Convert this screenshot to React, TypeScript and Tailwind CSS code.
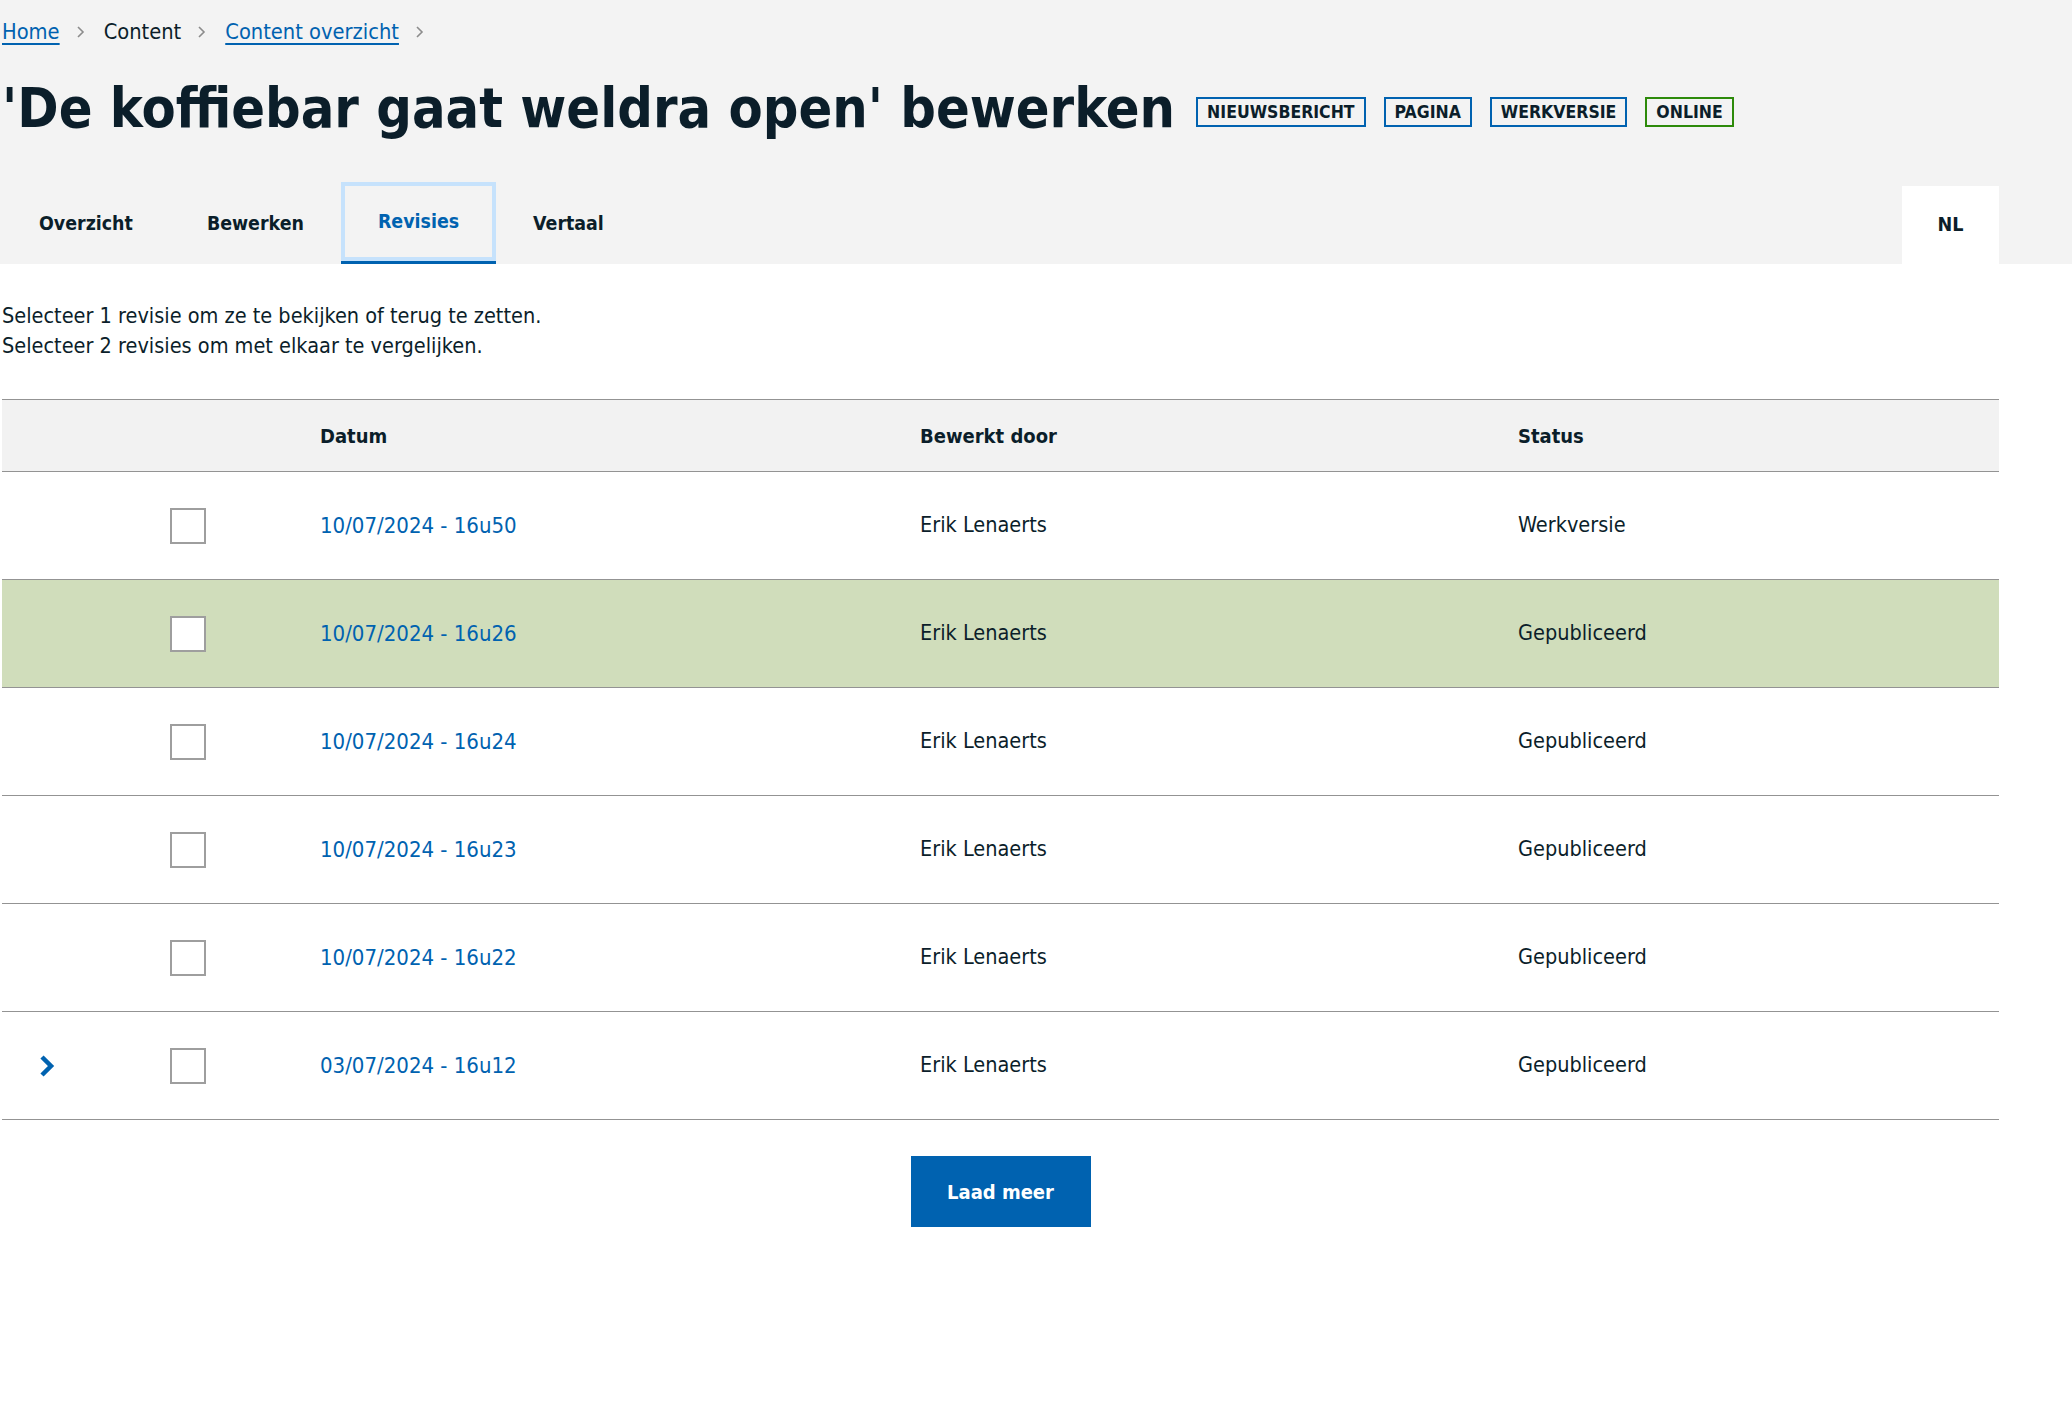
import React from "react";

const font = "font-['DejaVu_Sans_Condensed','Liberation_Sans',sans-serif]";

const Crumb = () => (
  <svg width="9" height="14" viewBox="0 0 9 14" className="ml-[16px] mr-[19px]">
    <polyline points="2,2 7,7 2,12" fill="none" stroke="#8c8c8c" strokeWidth="1.6" />
  </svg>
);

const revisions = [
  { date: "10/07/2024 - 16u50", by: "Erik Lenaerts", status: "Werkversie" },
  { date: "10/07/2024 - 16u26", by: "Erik Lenaerts", status: "Gepubliceerd", active: true },
  { date: "10/07/2024 - 16u24", by: "Erik Lenaerts", status: "Gepubliceerd" },
  { date: "10/07/2024 - 16u23", by: "Erik Lenaerts", status: "Gepubliceerd" },
  { date: "10/07/2024 - 16u22", by: "Erik Lenaerts", status: "Gepubliceerd" },
  { date: "03/07/2024 - 16u12", by: "Erik Lenaerts", status: "Gepubliceerd", expand: true },
];

const tabs = ["Overzicht", "Bewerken", "Revisies", "Vertaal"];

export default function App() {
  return (
    <div className={`${font} bg-white text-[#0b1e2a] min-h-screen`}>
      {/* Header */}
      <div className="bg-[#f3f3f3]">
        <div className="ml-[2px] w-[1997px]">
          <nav className="flex items-center pt-[14px] text-[21.7px] leading-[36px]">
            <a href="#" className="text-[#0062b0] underline underline-offset-[4px]">Home</a>
            <Crumb />
            <span>Content</span>
            <Crumb />
            <a href="#" className="text-[#0062b0] underline underline-offset-[4px]">Content overzicht</a>
            <Crumb />
          </nav>

          <div className="mt-[15px] flex items-center">
            <h1 className="whitespace-nowrap text-[55.4px] font-bold leading-[86px]">
              'De koffiebar gaat weldra open' bewerken
            </h1>
            <div className="ml-[21px] mt-[8px] flex gap-[18px]">
              {["NIEUWSBERICHT", "PAGINA", "WERKVERSIE"].map((b) => (
                <span
                  key={b}
                  className="border-2 border-[#0062b0] px-[9px] text-[17.5px] font-bold leading-[26px]"
                >
                  {b}
                </span>
              ))}
              <span className="border-2 border-[#2d8a0a] px-[9px] text-[17.5px] font-bold leading-[26px]">
                ONLINE
              </span>
            </div>
          </div>

          <div className="mt-[31px] flex items-end justify-between">
            <div className="flex items-end">
              {tabs.map((t) =>
                t === "Revisies" ? (
                  <div
                    key={t}
                    className="flex h-[82px] items-center border-b-[3px] border-[#0062b0] px-[37px] text-[19.4px] font-bold text-[#0062b0] shadow-[inset_0_0_0_4px_#c6e2fc]"
                  >
                    {t}
                  </div>
                ) : (
                  <div key={t} className="flex h-[80px] items-center px-[37px] text-[19.4px] font-bold">
                    {t}
                  </div>
                )
              )}
            </div>
            <div className="flex h-[78px] w-[97px] items-center justify-center bg-white text-[19.6px] font-bold">
              NL
            </div>
          </div>
        </div>
      </div>

      {/* Content */}
      <div className="ml-[2px] w-[1997px]">
        <div className="mt-[37px] text-[21.5px] leading-[30px]">
          <p>Selecteer 1 revisie om ze te bekijken of terug te zetten.</p>
          <p>Selecteer 2 revisies om met elkaar te vergelijken.</p>
        </div>

        <div className="mt-[38px] border-t border-[#939393]">
          <div className="grid h-[72px] grid-cols-[168px_150px_600px_598px_1fr] items-center border-b border-[#939393] bg-[#f2f2f2] text-[20px] font-bold">
            <div />
            <div />
            <div>Datum</div>
            <div>Bewerkt door</div>
            <div>Status</div>
          </div>
          {revisions.map((r) => (
            <div
              key={r.date}
              className={`grid h-[108px] grid-cols-[168px_150px_600px_598px_1fr] items-center border-b border-[#939393] text-[21.5px] ${
                r.active ? "bg-[#d0ddbb]" : ""
              }`}
            >
              <div className="flex items-center pl-[36px]">
                {r.expand && (
                  <svg width="18" height="24" viewBox="0 0 18 24">
                    <polyline
                      points="4,3 13,12 4,21"
                      fill="none"
                      stroke="#0062b0"
                      strokeWidth="4.5"
                      strokeLinejoin="miter"
                    />
                  </svg>
                )}
              </div>
              <div>
                <div className="h-[36px] w-[36px] border-2 border-[#9e9e9e] bg-white" />
              </div>
              <div>
                <a href="#" className="text-[22px] text-[#0062b0]">{r.date}</a>
              </div>
              <div>{r.by}</div>
              <div>{r.status}</div>
            </div>
          ))}
        </div>

        <div className="mt-[36px] flex justify-center">
          <button className="h-[71px] w-[180px] bg-[#0062b0] text-[20px] font-bold text-white">
            Laad meer
          </button>
        </div>
      </div>
    </div>
  );
}
